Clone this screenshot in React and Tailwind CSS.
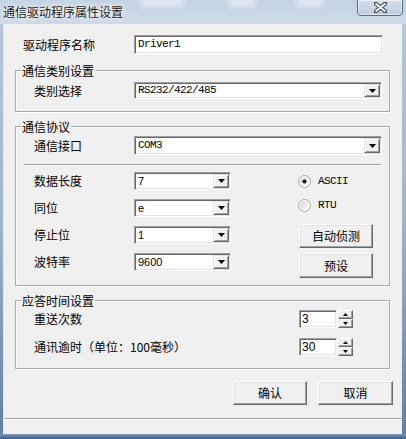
import React from "react";

const CJK = "font-['Noto_Sans_CJK_SC',sans-serif]";
const MONO = "font-['Liberation_Mono',monospace] text-[11px] tracking-[-0.6px]";

function Sunken({ className = "", children }) {
  return (
    <div
      className={`border border-t-[#a0a0a0] border-l-[#a0a0a0] border-r-white border-b-white bg-white p-[1px] shadow-[inset_1px_1px_0_#696969,inset_-1px_-1px_0_#e3e3e3] ${className}`}
    >
      {children}
    </div>
  );
}

function DownTri() {
  return (
    <svg width="7" height="4" viewBox="0 0 7 4">
      <path d="M0 0H7L3.5 4Z" fill="#000" />
    </svg>
  );
}

function DropBtn() {
  return (
    <div className="w-[16px] self-stretch bg-[#f0f0f0] border border-t-[#e3e3e3] border-l-[#e3e3e3] border-r-[#696969] border-b-[#696969] shadow-[inset_1px_1px_0_#fff,inset_-1px_-1px_0_#a0a0a0] flex items-center justify-center">
      <DownTri />
    </div>
  );
}

function Combo({ value, className = "", mono = true }) {
  return (
    <Sunken className={`flex ${className}`}>
      <span
        className={`flex-1 pl-[2px] self-center text-black leading-none ${
          mono ? MONO : "font-['Liberation_Sans',sans-serif] text-[11px]"
        }`}
      >
        {value}
      </span>
      <DropBtn />
    </Sunken>
  );
}

function Btn({ children, className = "" }) {
  return (
    <div
      className={`bg-[#f0f0f0] border border-t-white border-l-white border-r-[#696969] border-b-[#696969] shadow-[inset_-1px_-1px_0_#a0a0a0,inset_1px_1px_0_#e3e3e3] flex items-center justify-center text-[12px] text-black leading-none ${CJK} ${className}`}
    >
      {children}
    </div>
  );
}

function Radio({ checked, label }) {
  return (
    <div className="flex items-center h-[18px]">
      <svg width="13" height="13" viewBox="0 0 13 13">
        <defs>
          <linearGradient id={`rg${label}`} x1="0" y1="0" x2="1" y2="1">
            <stop offset="0" stopColor="#d4d4d4" />
            <stop offset="1" stopColor="#fdfdfd" />
          </linearGradient>
        </defs>
        <circle cx="6.5" cy="6.5" r="6" fill="#fff" stroke="#a7a7a7" />
        <circle cx="6.5" cy="6.5" r="4.5" fill={`url(#rg${label})`} />
        {checked && <circle cx="6.5" cy="6.5" r="2" fill="#111" />}
      </svg>
      <span className={`ml-[7px] text-black leading-none ${MONO}`}>{label}</span>
    </div>
  );
}

function SpinArrow({ up }) {
  return (
    <svg width="5" height="3" viewBox="0 0 5 3">
      <path d={up ? "M0 3H5L2.5 0Z" : "M0 0H5L2.5 3Z"} fill="#000" />
    </svg>
  );
}

function SpinBtn({ up }) {
  return (
    <div className="flex-1 bg-[#f0f0f0] border border-t-white border-l-white border-r-[#696969] border-b-[#696969] shadow-[inset_-1px_-1px_0_#a0a0a0] flex items-center justify-center">
      <SpinArrow up={up} />
    </div>
  );
}

function Spin({ value }) {
  return (
    <div className="flex h-[18px] ml-auto mr-[36px]">
      <Sunken className="w-[38px] flex items-center">
        <span className="pl-[1px] font-['Liberation_Sans',sans-serif] text-[12px] leading-none text-black">
          {value}
        </span>
      </Sunken>
      <div className="w-[15px] ml-[1px] flex flex-col">
        <SpinBtn up />
        <SpinBtn />
      </div>
    </div>
  );
}

function Group({ title, className = "", children }) {
  return (
    <div
      className={`relative border border-[#a9a9a9] shadow-[inset_1px_1px_0_#fff,1px_1px_0_#fff] ${className}`}
    >
      <span
        className={`absolute left-[5px] -top-[8px] px-[1px] bg-[#f0f0f0] text-[12px] leading-[15px] text-black ${CJK}`}
      >
        {title}
      </span>
      {children}
    </div>
  );
}

function Label({ children, className = "" }) {
  return (
    <span className={`text-[12px] leading-none text-black ${CJK} ${className}`}>
      {children}
    </span>
  );
}

export default function App() {
  return (
    <div className="w-[406px] h-[439px] overflow-hidden relative bg-gradient-to-b from-[#b9c9db] via-[#9fb5ce] to-[#5f7fa6] flex flex-col">
      {/* title bar */}
      <div className="relative h-[24px] shrink-0 bg-gradient-to-b from-[#c4d3e3] to-[#cfdae6] overflow-hidden">
        <div className="absolute left-[140px] top-[-2px] w-[45px] h-[8px] rounded-full bg-white/60 blur-[3px]" />
        <div className="absolute left-[228px] top-[-2px] w-[28px] h-[8px] rounded-full bg-white/60 blur-[3px]" />
        <div className="absolute left-[296px] top-[-2px] w-[28px] h-[8px] rounded-full bg-white/60 blur-[3px]" />
        <span
          className={`absolute left-[3px] top-[4px] text-[12px] leading-[15px] text-[#1a1a1a] ${CJK} [text-shadow:0_0_6px_#fff,0_0_3px_#fff]`}
        >
          通信驱动程序属性设置
        </span>
        <div className="absolute left-[357px] top-[-1px] w-[46px] h-[17px] rounded-b-[4px] border border-[#5a6b82] shadow-[inset_0_0_0_1px_rgba(255,255,255,0.55)] bg-gradient-to-b from-[#d5dfea] to-[#bccbdb] flex items-center justify-center">
          <svg width="13" height="11" viewBox="0 0 13 11">
            <path
              d="M1 1L12 10M12 1L1 10"
              stroke="#3b4a5c"
              strokeWidth="4"
              strokeLinecap="square"
            />
            <path d="M1.5 1.5L11.5 9.5M11.5 1.5L1.5 9.5" stroke="#fff" strokeWidth="2" />
          </svg>
        </div>
      </div>

      {/* client area */}
      <div className="ml-[3px] w-[399px] h-[410px] bg-[#f0f0f0] border-l border-[#dfe7f0] flex flex-col">
        <div className="pl-[11px] pr-[12px] pt-[11px] flex flex-col">
          {/* driver name */}
          <div className="h-[19px] flex items-center">
            <Label className="ml-[8px] w-[111px]">驱动程序名称</Label>
            <Sunken className="w-[249px] h-[19px] flex items-center">
              <span className={`pl-[2px] leading-none text-black ${MONO}`}>Driver1</span>
            </Sunken>
          </div>

          {/* group 1 */}
          <Group title="通信类别设置" className="mt-[16px] h-[42px] pt-[11px]">
            <div className="h-[17px] flex items-center">
              <Label className="ml-[18px] w-[100px]">类别选择</Label>
              <Combo value="RS232/422/485" className="w-[248px] h-[17px]" />
            </div>
          </Group>

          {/* group 2 */}
          <Group title="通信协议" className="mt-[14px] h-[160px] pt-[9px]">
            <div className="h-[19px] flex items-center">
              <Label className="ml-[18px] w-[100px]">通信接口</Label>
              <Combo value="COM3" className="w-[248px] h-[19px]" />
            </div>
            <div className="mt-[9px] mx-[8px] h-[2px] border-t border-[#a0a0a0] border-b border-b-white" />
            <div className="mt-[6px] flex">
              <div className="flex flex-col gap-[9px]">
                {[
                  ["数据长度", "7"],
                  ["同位", "e"],
                  ["停止位", "1"],
                  ["波特率", "9600"],
                ].map(([l, v]) => (
                  <div key={l} className="h-[18px] flex items-center">
                    <Label className="ml-[18px] w-[100px]">{l}</Label>
                    <Combo value={v} mono={false} className="w-[97px] h-[18px]" />
                  </div>
                ))}
              </div>
              <div className="ml-[67px] flex flex-col">
                <Radio checked label="ASCII" />
                <div className="mt-[6px]">
                  <Radio label="RTU" />
                </div>
                <Btn className="mt-[10px] ml-[1px] w-[74px] h-[24px]">自动侦测</Btn>
                <Btn className="mt-[5px] ml-[1px] w-[74px] h-[25px]">预设</Btn>
              </div>
            </div>
          </Group>

          {/* group 3 */}
          <Group title="应答时间设置" className="mt-[14px] h-[69px] pt-[9px]">
            <div className="h-[18px] flex items-center">
              <Label className="ml-[18px]">重送次数</Label>
              <Spin value="3" />
            </div>
            <div className="mt-[10px] h-[18px] flex items-center">
              <Label className="ml-[18px]">通讯逾时（单位：100毫秒）</Label>
              <Spin value="30" />
            </div>
          </Group>
        </div>

        {/* bottom buttons */}
        <div className="mt-[12px] pr-[9px] flex justify-end gap-[11px]">
          <Btn className="w-[74px] h-[24px]">确认</Btn>
          <Btn className="w-[75px] h-[24px]">取消</Btn>
        </div>

        {/* status bar */}
        <div className="mt-[13px] h-[16px] border-t border-[#a0a0a0] shadow-[inset_0_1px_0_#fff]" />
      </div>
      <div className="h-[5px] bg-gradient-to-b from-[#7d98bb] to-[#3e5f88]" />
    </div>
  );
}
